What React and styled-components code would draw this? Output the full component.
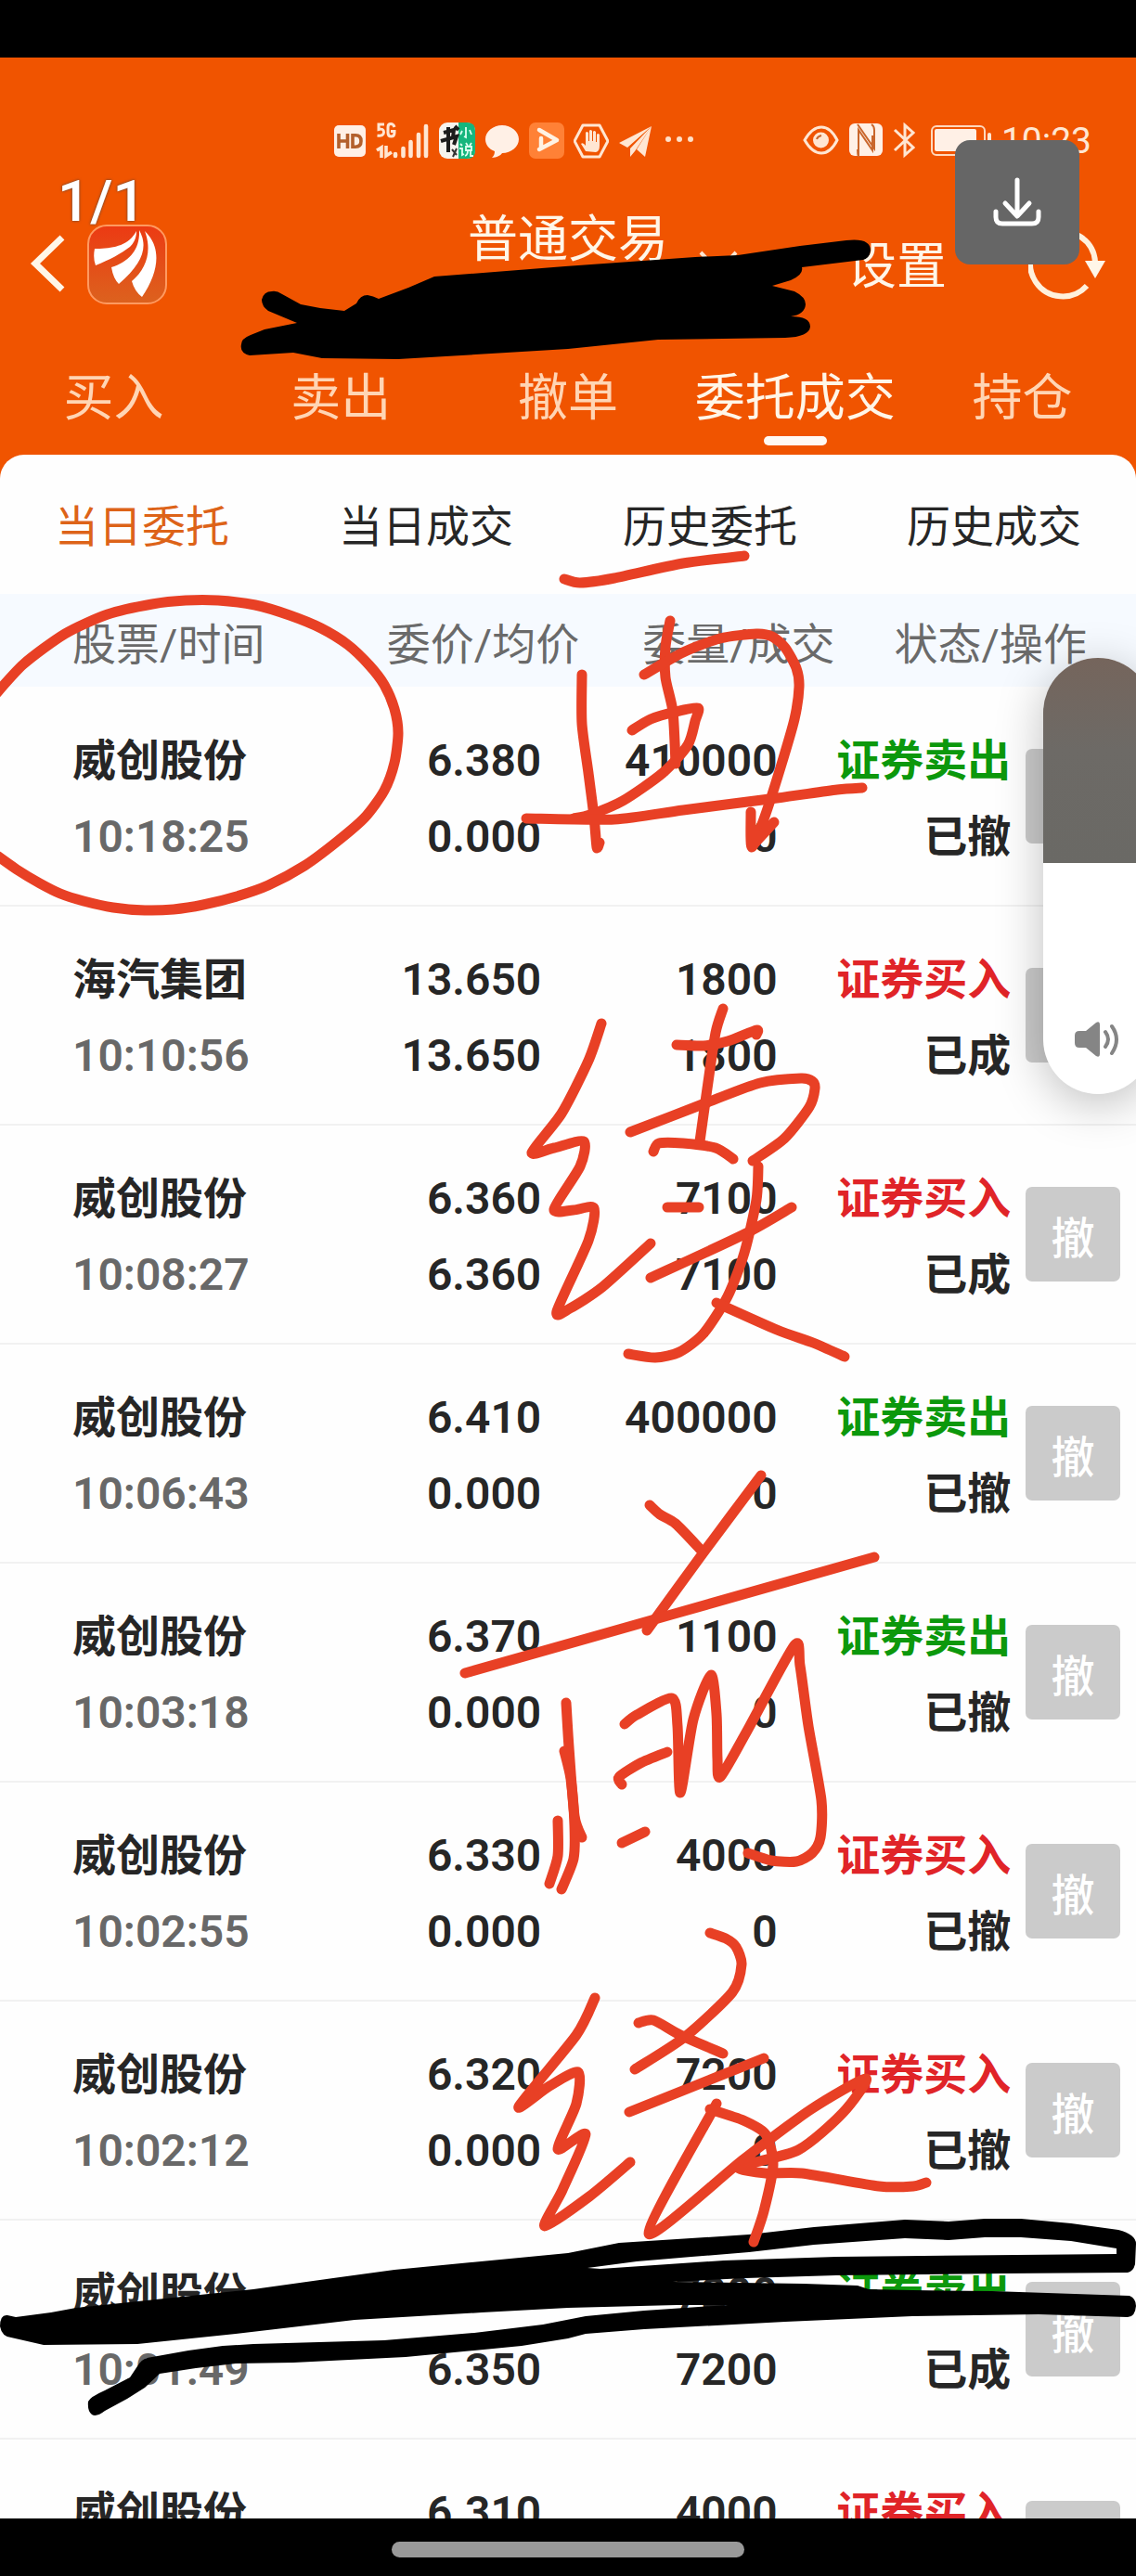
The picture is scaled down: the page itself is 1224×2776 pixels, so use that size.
import React, { useState } from "react";
import styled, { createGlobalStyle } from "styled-components";

const tabs = ["买入", "卖出", "撤单", "委托成交", "持仓"];
const subTabs = ["当日委托", "当日成交", "历史委托", "历史成交"];

const orders = [
  { name: "威创股份", time: "10:18:25", price: "6.380", avg: "0.000", amount: "410000", done: "0", side: "sell", status: "已撤" },
  { name: "海汽集团", time: "10:10:56", price: "13.650", avg: "13.650", amount: "1800", done: "1800", side: "buy", status: "已成" },
  { name: "威创股份", time: "10:08:27", price: "6.360", avg: "6.360", amount: "7100", done: "7100", side: "buy", status: "已成" },
  { name: "威创股份", time: "10:06:43", price: "6.410", avg: "0.000", amount: "400000", done: "0", side: "sell", status: "已撤" },
  { name: "威创股份", time: "10:03:18", price: "6.370", avg: "0.000", amount: "1100", done: "0", side: "sell", status: "已撤" },
  { name: "威创股份", time: "10:02:55", price: "6.330", avg: "0.000", amount: "4000", done: "0", side: "buy", status: "已撤" },
  { name: "威创股份", time: "10:02:12", price: "6.320", avg: "0.000", amount: "7200", done: "0", side: "buy", status: "已撤" },
  { name: "威创股份", time: "10:01:49", price: "6.350", avg: "6.350", amount: "7200", done: "7200", side: "sell", status: "已成" },
  { name: "威创股份", time: "10:01:20", price: "6.310", avg: "6.310", amount: "4000", done: "4000", side: "buy", status: "已成" },
];

// pen strokes, each one a list of points
const redStrokes = [
  [[-8, 752], [25, 716], [70, 683], [116, 662], [164, 651], [200, 647], [235, 647], [275, 652], [312, 663], [346, 677], [375, 695], [398, 717], [414, 738], [425, 764], [429, 790], [425, 822], [414, 852], [393, 881], [363, 907], [328, 933], [289, 954], [255, 966], [219, 975], [187, 980], [156, 981], [122, 978], [90, 971], [65, 963], [43, 952], [18, 937], [-6, 920]],
  [[608, 624], [625, 628], [662, 623], [736, 607], [802, 599]],
  [[627, 727], [627, 780], [634, 833], [640, 880], [643, 913], [646, 908]],
  [[722, 669], [717, 697], [717, 730], [725, 767], [728, 823]],
  [[694, 727], [736, 703], [776, 688], [815, 683], [832, 686], [846, 698], [858, 720], [861, 740], [856, 775], [841, 827], [824, 880], [810, 913], [809, 875]],
  [[834, 886], [811, 911]],
  [[681, 787], [701, 775], [728, 767], [752, 763], [749, 777], [741, 803], [714, 833], [671, 863], [636, 878], [618, 882]],
  [[567, 882], [662, 883], [736, 873], [837, 860], [902, 851], [929, 849]],
  [[648, 1103], [634, 1143], [605, 1200], [573, 1242], [597, 1237], [629, 1230], [625, 1257], [597, 1303], [618, 1304], [640, 1302], [634, 1337], [600, 1413], [614, 1410], [649, 1387], [701, 1340]],
  [[779, 1087], [771, 1113], [762, 1173], [754, 1230]],
  [[729, 1126], [758, 1127], [784, 1122], [815, 1110], [815, 1115]],
  [[679, 1220], [762, 1188], [819, 1167], [863, 1162], [875, 1165], [878, 1173], [872, 1193], [845, 1227], [811, 1251]],
  [[704, 1241], [710, 1232], [736, 1232], [771, 1237], [790, 1249]],
  [[817, 1257], [815, 1293], [802, 1350], [784, 1397], [758, 1437], [732, 1457], [706, 1463], [677, 1459]],
  [[719, 1301], [753, 1301]],
  [[701, 1377], [802, 1330], [853, 1301]],
  [[772, 1404], [837, 1433], [876, 1447], [910, 1462]],
  [[700, 1622], [711, 1632], [728, 1642], [755, 1670]],
  [[820, 1590], [758, 1673], [697, 1757]],
  [[501, 1803], [942, 1678]],
  [[610, 1835], [613, 1883], [619, 1957], [627, 1980]],
  [[608, 1887], [615, 1917], [619, 1967], [618, 2003], [605, 2036]],
  [[601, 1962], [601, 2000], [592, 2030]],
  [[673, 1858], [686, 1848], [724, 1830], [730, 1860], [733, 1932], [747, 1853], [766, 1805], [772, 1847], [773, 1895], [776, 1915], [804, 1867], [856, 1773], [862, 1795], [871, 1860], [885, 1940], [884, 1980], [875, 1997], [858, 2006], [831, 2005], [806, 1997]],
  [[719, 1888], [690, 1900], [667, 1915], [670, 1923]],
  [[670, 1986], [695, 1974]],
  [[765, 2083], [782, 2089], [793, 2098], [799, 2117], [789, 2147], [738, 2195], [684, 2230]],
  [[688, 2180], [704, 2177], [733, 2193], [779, 2213]],
  [[678, 2276], [823, 2218]],
  [[641, 2153], [621, 2193], [559, 2270], [592, 2248], [623, 2233], [621, 2267], [601, 2316], [631, 2300], [606, 2360], [587, 2399], [635, 2367], [679, 2330]],
  [[772, 2267], [699, 2407], [801, 2327], [874, 2273], [933, 2240], [908, 2277], [860, 2317], [796, 2335], [825, 2342], [864, 2342], [947, 2356], [984, 2356], [998, 2352]],
  [[765, 2273], [801, 2285], [825, 2300], [833, 2333], [823, 2383], [812, 2416]],
];

function smooth(points) {
  let d = `M${points[0][0]} ${points[0][1]}`;
  for (let i = 0; i < points.length - 1; i++) {
    const p0 = points[i - 1] || points[i];
    const p1 = points[i];
    const p2 = points[i + 1];
    const p3 = points[i + 2] || p2;
    const c1 = [p1[0] + (p2[0] - p0[0]) / 8, p1[1] + (p2[1] - p0[1]) / 8];
    const c2 = [p2[0] - (p3[0] - p1[0]) / 8, p2[1] - (p3[1] - p1[1]) / 8];
    d += ` C${c1.join(" ")} ${c2.join(" ")} ${p2.join(" ")}`;
  }
  return d;
}

function StatusIcons() {
  return (
    <>
      <svg width="36" height="40" viewBox="0 0 36 40">
        <rect x="1" y="3" width="34" height="34" rx="5" fill="#fff0e6" />
        <path d="M6 12v16M15.500 12v16M6 20h9.500M21 13.800h3q6 0 6 6.200t-6 6.200h-3z" fill="none" stroke="#b3602c" strokeWidth="3.600" />
      </svg>
      <svg width="58" height="40" viewBox="0 0 58 40" fill="none" stroke="#ffe6d2">
        <path d="M9 2H3v5.500q5.500-1.500 5.500 3t-7 3.500M20 5Q19 1.500 16 1.500T13 5v6q0 4 3.500 4t3.500-4V9.500h-4" strokeWidth="3" />
        <path d="M1 30l5-3v11M11 25v11l6-4" strokeWidth="3.600" />
        <path d="M21 34v2M29.500 28v8M37.500 21v15M46 13v23M54 4v32" strokeWidth="4.600" strokeLinecap="round" />
      </svg>
      <svg width="39" height="40" viewBox="0 0 39 40">
        <rect width="39" height="39" rx="9" fill="#f6f3ee" />
        <path d="M21 0h9q9 0 9 9v21q0 9-9 9h-9z" fill="#16b67d" />
        <path d="M5 11l11-3-1 8M2 20l17-5-3 9M10 5v27M17 4l4 4" fill="none" stroke="#1c1c1c" strokeWidth="4" />
        <path d="M14 29l5 6M19 28l-4 9" stroke="#333" strokeWidth="2" />
        <path d="M29 5v11l-2-1M25 9l-2 4M33 8l2 5M23 23l2 2M22 28h3v7l2-1M29 22l2 3M35 22l-2 3M29 26h6v4h-6zM31 30q0 5-3 6M34 30v6h3" fill="none" stroke="#dcfff0" strokeWidth="1.800" />
      </svg>
      <svg width="38" height="40" viewBox="0 0 38 40">
        <path d="M19 3c10 0 18 7 18 15s-8 15-18 15c-1 2-6 5-11 5 2-2 3-4 3-7C5 29 1 24 1 18 1 10 9 3 19 3z" fill="#fff0e6" />
      </svg>
      <svg width="38" height="40" viewBox="0 0 38 40">
        <rect width="38" height="39" rx="7" fill="#ff8136" />
        <path d="M11 8l19 11-19 10M13 28V17" fill="none" stroke="#fff2e4" strokeWidth="4.500" strokeLinejoin="round" strokeLinecap="round" />
      </svg>
      <svg width="38" height="40" viewBox="0 0 38 40">
        <path d="M10 3h18l9 17-9 17H10L1 20z" fill="none" stroke="#ffe6d2" strokeWidth="3" strokeLinejoin="round" />
        <path d="M13 31q-3-5-5-8 2-2 5 2V11q1-2 3 0v9h1V9q1-2 3 0v11h1V10q1-2 3 0v11h1v-8q1-2 3 0v12q0 6-4 7z" fill="#ffe6d2" />
      </svg>
      <svg width="38" height="40" viewBox="0 0 38 40">
        <path d="M36 4L1 22l9 5z M36 4L13 28v9l5-6z M36 4L20 29l9 8z" fill="#ffe6d2" />
      </svg>
      <svg width="36" height="40" viewBox="0 0 36 40" fill="#ffe0c8">
        <circle cx="6" cy="18" r="3" />
        <circle cx="18" cy="18" r="3" />
        <circle cx="30" cy="18" r="3" />
      </svg>
    </>
  );
}

function SystemIcons() {
  return (
    <>
      <svg width="40" height="40" viewBox="0 0 40 40" fill="none" stroke="#ffe6d2" strokeWidth="3">
        <path d="M2 19Q10 5 20 5t17 14Q30 33 20 33T2 19z" />
        <circle cx="19.500" cy="19" r="8.500" fill="#ffe6d2" stroke="none" />
        <path d="M15 18q1-3 5-4" stroke="#c9662c" strokeWidth="2" />
      </svg>
      <svg width="36" height="40" viewBox="0 0 36 40">
        <rect x="0" y="1" width="36" height="35" rx="6" fill="#fff0e6" />
        <path d="M10 37V8l15 22V14M9 2l18 26V8q0-4-3-6M10 37q-1-3-1-8" fill="none" stroke="#c9662c" strokeWidth="2" />
      </svg>
      <svg width="26" height="40" viewBox="0 0 26 40">
        <path d="M3 8l20 19-9 8V3l9 8L3 30" fill="none" stroke="#ffe6d2" strokeWidth="3" />
      </svg>
      <svg width="72" height="40" viewBox="0 0 72 40">
        <rect x="7" y="4" width="57" height="31" rx="5" fill="none" stroke="#ffd9bd" strokeWidth="2" />
        <rect x="10" y="7" width="45" height="24" rx="2" fill="#fff0e6" />
        <rect x="67" y="11" width="4" height="18" rx="2" fill="#ffe6d2" />
      </svg>
    </>
  );
}

function Annotations() {
  return (
    <Overlay viewBox="0 0 1224 2776" preserveAspectRatio="xMidYMin meet" aria-hidden="true">
      <path d="M282 323Q284 314 293 314Q298 313 304 317L324 328L345 332L371 335L384 327Q388 318 396 318Q402 319 408 322L440 310L468 298L609 287L749 277L795 275L862 265L912 259Q938 256 938 270Q937 278 930 280L864 288Q866 296 852 302L832 308L856 314Q868 320 868 328Q867 339 852 341Q873 341 873 352Q872 363 846 364L709 366L612 376L429 387L347 386L316 380L269 383Q258 380 260 371Q260 365 270 361L285 355L320 348L289 335Q282 330 282 323z" />
      <path
        fillRule="evenodd"
        d="M0 2507Q0 2494 8 2495L17 2497L55 2492L82 2487L273 2467L359 2455L425 2446L612 2428L667 2417L807 2408L877 2400L975 2392L1022 2394L1061 2391L1100 2391L1154 2396L1205 2403Q1224 2408 1224 2418L1223 2440Q1221 2448 1215 2449L1080 2450L901 2452L803 2455L725 2459L866 2461L924 2463L936 2467L983 2468L1069 2469L1217 2474Q1224 2477 1224 2485Q1223 2497 1215 2497L1119 2494L983 2496L846 2502L694 2510L631 2515L612 2520L562 2528L437 2540L316 2546L254 2547L211 2552L172 2558L156 2573L137 2585L113 2598Q104 2605 99 2602Q94 2598 95 2588Q97 2583 113 2576L140 2562L150 2547Q154 2541 164 2540L203 2533L240 2528L273 2526L414 2522L511 2514L585 2505L631 2496L694 2490L784 2484L729 2484L612 2487L519 2492L382 2500L254 2515L148 2526L47 2527L12 2519Q2 2518 0 2507z
           M1203 2429V2423L1154 2415L1100 2411H1061L1022 2414L975 2412L877 2419L807 2427L745 2432L686 2437L633 2444L647 2445L780 2436L901 2432z"
      />
      {redStrokes.map((points, i) => (
        <path key={i} d={smooth(points)} fill="none" stroke="#e84025" strokeWidth="11" strokeLinecap="round" strokeLinejoin="round" />
      ))}
    </Overlay>
  );
}

export default function App() {
  const [tab, setTab] = useState("委托成交");
  const [subTab, setSubTab] = useState("当日委托");
  const [volume, setVolume] = useState(53);

  return (
    <Screen>
      <GlobalStyle />
      <Notch />
      <Header>
        <StatusBar>
          <IconGroup>
            <StatusIcons />
          </IconGroup>
          <IconGroup>
            <SystemIcons />
            <Clock>10:23</Clock>
          </IconGroup>
        </StatusBar>
        <TitleBar>
          <TitleSide>
            <IconButton aria-label="返回">
              <svg width="40" height="66" viewBox="0 0 40 66">
                <path d="M35 4L6 32l29 28" fill="none" stroke="#fff6e8" strokeWidth="7" />
              </svg>
            </IconButton>
            <AppLogo width="86" height="86" viewBox="0 0 86 86">
              <defs>
                <linearGradient id="logo" x1="0" y1="0" x2="0" y2="1">
                  <stop offset="0" stopColor="#ec3a13" />
                  <stop offset="1" stopColor="#dc621e" />
                </linearGradient>
              </defs>
              <rect x="1" y="1" width="84" height="84" rx="20" fill="url(#logo)" stroke="#ff9a60" strokeWidth="2" />
              <path d="M53 7C53 14 51 19 46 24 37 31 24 38 9 44Q6 36 8 26C25 26 44 24 53 7z" fill="#fff" />
              <path d="M56 6C66 24 60 42 34 64Q28 58 26 46C46 40 57 26 56 6z" fill="#fff" />
              <path d="M62 7C80 24 78 50 59 78Q51 72 48 61C64 48 70 28 62 7z" fill="#fff" />
            </AppLogo>
          </TitleSide>
          <Title>普通交易</Title>
          <TitleSide>
            <Caret width="44" height="30" viewBox="0 0 44 30">
              <path d="M3 2l19 20L41 2" fill="none" stroke="#ffe6d2" strokeWidth="4" />
            </Caret>
            <Settings>设置</Settings>
            <IconButton aria-label="刷新">
              <svg width="84" height="84" viewBox="0 0 84 84">
                <path d="M63 65A35 35 0 1 1 72 39" fill="none" stroke="#fff1dc" strokeWidth="6" />
                <path d="M61 38h22L72 57z" fill="#fff6e8" />
              </svg>
            </IconButton>
          </TitleSide>
        </TitleBar>
        <Tabs>
          {tabs.map((t) => (
            <Tab key={t} $active={t === tab} onClick={() => setTab(t)}>
              {t}
            </Tab>
          ))}
        </Tabs>
      </Header>

      <Panel>
        <SubTabs>
          {subTabs.map((t) => (
            <SubTab key={t} $active={t === subTab} onClick={() => setSubTab(t)}>
              {t}
            </SubTab>
          ))}
        </SubTabs>
        <OrderTable>
          <colgroup>
            <Col $width="33%" />
            <Col $width="18%" />
            <Col $width="22.5%" />
            <Col $width="15.5%" />
            <Col $width="11%" />
          </colgroup>
          <thead>
            <tr>
              <HeadCell $left>股票/时间</HeadCell>
              <HeadCell>委价/均价</HeadCell>
              <HeadCell>委量/成交</HeadCell>
              <HeadCell colSpan={2} $inset>
                状态/操作
              </HeadCell>
            </tr>
          </thead>
          <tbody>
            {orders.map((o) => (
              <OrderRow key={o.time}>
                <StockCell>
                  <Label>{o.name}</Label>
                  <Figure $muted>{o.time}</Figure>
                </StockCell>
                <PriceCell>
                  <Figure>{o.price}</Figure>
                  <Figure>{o.avg}</Figure>
                </PriceCell>
                <AmountCell>
                  <Figure>{o.amount}</Figure>
                  <Figure>{o.done}</Figure>
                </AmountCell>
                <StatusCell>
                  <Label $side={o.side}>{o.side === "buy" ? "证券买入" : "证券卖出"}</Label>
                  <Label>{o.status}</Label>
                </StatusCell>
                <ActionCell>
                  <CancelButton disabled>撤</CancelButton>
                </ActionCell>
              </OrderRow>
            ))}
          </tbody>
        </OrderTable>
      </Panel>
      <HomeBar>
        <HomeIndicator />
      </HomeBar>

      <Annotations />
      <Counter>1/1</Counter>
      <DownloadButton aria-label="下载">
        <svg width="56" height="56" viewBox="0 0 56 56" fill="none" stroke="#fff" strokeWidth="5" strokeLinecap="round" strokeLinejoin="round">
          <path d="M28 4v38M15 29l13 14 13-14M5 38v6q0 7 7 7h32q7 0 7-7v-6" />
        </svg>
      </DownloadButton>
      <VolumePanel>
        <VolumeRest style={{ height: `${100 - volume}%` }} />
        <VolumeInput type="range" aria-label="音量" value={volume} onChange={(e) => setVolume(Number(e.target.value))} />
        <Speaker width="52" height="40" viewBox="0 0 52 40">
          <path d="M6 11h7L24 2q4-2 4 2v32q0 4-4 2l-11-9H6q-5 0-5-5v-8q0-5 5-5z" fill="#858585" />
          <path d="M34 12q6 8 0 16M41 6q10 14 0 29" fill="none" stroke="#858585" strokeWidth="4" strokeLinecap="round" />
        </Speaker>
      </VolumePanel>
    </Screen>
  );
}

const GlobalStyle = createGlobalStyle`
  * {
    box-sizing: border-box;
  }
  body {
    margin: 0;
    font-family: Roboto, "Noto Sans CJK SC", sans-serif;
  }
  button {
    padding: 0;
    border: 0;
    background: none;
    font-family: inherit;
    color: inherit;
  }
  svg {
    display: block;
    flex-shrink: 0;
  }
`;
const Screen = styled.div`
  position: relative;
  display: flex;
  flex-direction: column;
  height: 100vh;
  overflow: hidden;
  background: #f05400;
`;
const Notch = styled.div`
  flex: 0 0 62px;
  background: #000;
`;
const Header = styled.header`
  padding-top: 70px;
  color: #fff6e8;
`;
const StatusBar = styled.div`
  display: flex;
  justify-content: space-between;
  padding: 0 48px 0 359px;
`;
const IconGroup = styled.div`
  display: flex;
  align-items: center;
  gap: 10px;
`;
const Clock = styled.span`
  font-size: 39px;
  line-height: 40px;
  color: #ffe6d2;
`;
const TitleBar = styled.div`
  display: grid;
  grid-template-columns: 1fr auto 1fr;
  align-items: center;
  height: 118px;
  margin: 54px 0 44px;
`;
const TitleSide = styled.div`
  display: flex;
  align-items: center;
  padding: 0 32px;
`;
const IconButton = styled.button`
  display: block;
`;
const AppLogo = styled.svg`
  margin-left: 22px;
`;
const Title = styled.h1`
  align-self: start;
  margin: 0;
  font-size: 54px;
  line-height: 66px;
  font-weight: 400;
`;
const Caret = styled.svg`
  margin-right: auto;
`;
const Settings = styled.button`
  margin-right: 88px;
  padding-top: 6px;
  font-size: 54px;
  line-height: 60px;
`;
const Tabs = styled.nav`
  display: grid;
  grid-template-columns: repeat(5, 1fr);
`;
const Tab = styled.button`
  display: flex;
  flex-direction: column;
  align-items: center;
  padding: 2px 0 10px;
  font-size: 54px;
  line-height: 80px;
  color: ${(p) => (p.$active ? "#fff6e8" : "#ffd5b4")};
  &::after {
    content: "";
    width: 68px;
    height: 10px;
    border-radius: 5px;
    background: ${(p) => (p.$active ? "#fffaf4" : "transparent")};
  }
`;
const Panel = styled.main`
  flex: 1 1 0;
  min-height: 0;
  overflow: hidden;
  border-radius: 26px 26px 0 0;
  background: #fefefe;
`;
const SubTabs = styled.nav`
  display: grid;
  grid-template-columns: repeat(4, 1fr);
`;
const SubTab = styled.button`
  padding-top: 6px;
  font-size: 47px;
  line-height: 144px;
  color: ${(p) => (p.$active ? "#dd6318" : "#262626")};
`;
const OrderTable = styled.table`
  width: 100%;
  table-layout: fixed;
  border-collapse: collapse;
`;
const Col = styled.col`
  width: ${(p) => p.$width};
`;
const HeadCell = styled.th`
  height: 100px;
  padding: 0 ${(p) => (p.$inset ? "53px" : "0")} 0 ${(p) => (p.$left ? "78px" : "0")};
  background: #f6faff;
  color: #6a6a6a;
  font-size: 47px;
  font-weight: 400;
  text-align: ${(p) => (p.$left ? "left" : "right")};
  white-space: nowrap;
`;
const OrderRow = styled.tr`
  height: 236px;
  border-bottom: 2px solid #f1f1f1;
`;
const Cell = styled.td`
  padding: 6px 0 0;
  text-align: right;
`;
const StockCell = styled(Cell)`
  padding-left: 78px;
  text-align: left;
`;
const PriceCell = styled(Cell)`
  padding-right: 41px;
`;
const AmountCell = styled(Cell)`
  padding-right: 62px;
`;
const StatusCell = styled(Cell)`
  white-space: nowrap;
`;
const ActionCell = styled(Cell)`
  padding: 0 17px 0 0;
`;
const sideColors = { buy: "#e02428", sell: "#0c980c" };
const Line = styled.div`
  line-height: 82px;
  font-weight: 600;
  color: ${(p) => (p.$side ? sideColors[p.$side] : p.$muted ? "#686868" : "#262626")};
`;
const Label = styled(Line)`
  font-size: 47px;
`;
const Figure = styled(Line)`
  font-size: 48px;
`;
const CancelButton = styled.button`
  width: 102px;
  height: 102px;
  border-radius: 7px;
  background: #cbcbcb;
  color: #fff;
  font-size: 47px;
  font-weight: 500;
  vertical-align: middle;
`;
const HomeBar = styled.footer`
  display: flex;
  justify-content: center;
  align-items: center;
  flex: 0 0 62px;
  padding-top: 4px;
  background: #000;
`;
const HomeIndicator = styled.div`
  width: 31%;
  height: 17px;
  border-radius: 9px;
  background: #999;
`;
const Overlay = styled.svg`
  position: absolute;
  top: 0;
  left: 0;
  width: 100%;
  height: 100%;
  pointer-events: none;
`;
const Counter = styled.span`
  position: absolute;
  top: 181px;
  left: 62px;
  font-size: 62px;
  line-height: 72px;
  font-weight: 500;
  color: #fff;
  text-shadow: 0 0 3px #444;
`;
const DownloadButton = styled.button`
  position: absolute;
  top: 151px;
  right: 61px;
  display: flex;
  justify-content: center;
  align-items: center;
  width: 134px;
  height: 134px;
  border-radius: 16px;
  background: #666;
`;
const VolumePanel = styled.div`
  position: absolute;
  top: 709px;
  right: -18px;
  width: 118px;
  height: 470px;
  overflow: hidden;
  border-radius: 59px;
  background: #fff;
  box-shadow: 0 10px 50px rgba(0, 0, 0, 0.25);
`;
const VolumeRest = styled.div`
  background: linear-gradient(#75655c, #6d6a66 45%, #6a6965);
`;
const VolumeInput = styled.input`
  position: absolute;
  inset: 0;
  width: 100%;
  height: 100%;
  margin: 0;
  opacity: 0;
  writing-mode: vertical-lr;
  direction: rtl;
`;
const Speaker = styled.svg`
  position: absolute;
  bottom: 39px;
  left: 33px;
  pointer-events: none;
`;
